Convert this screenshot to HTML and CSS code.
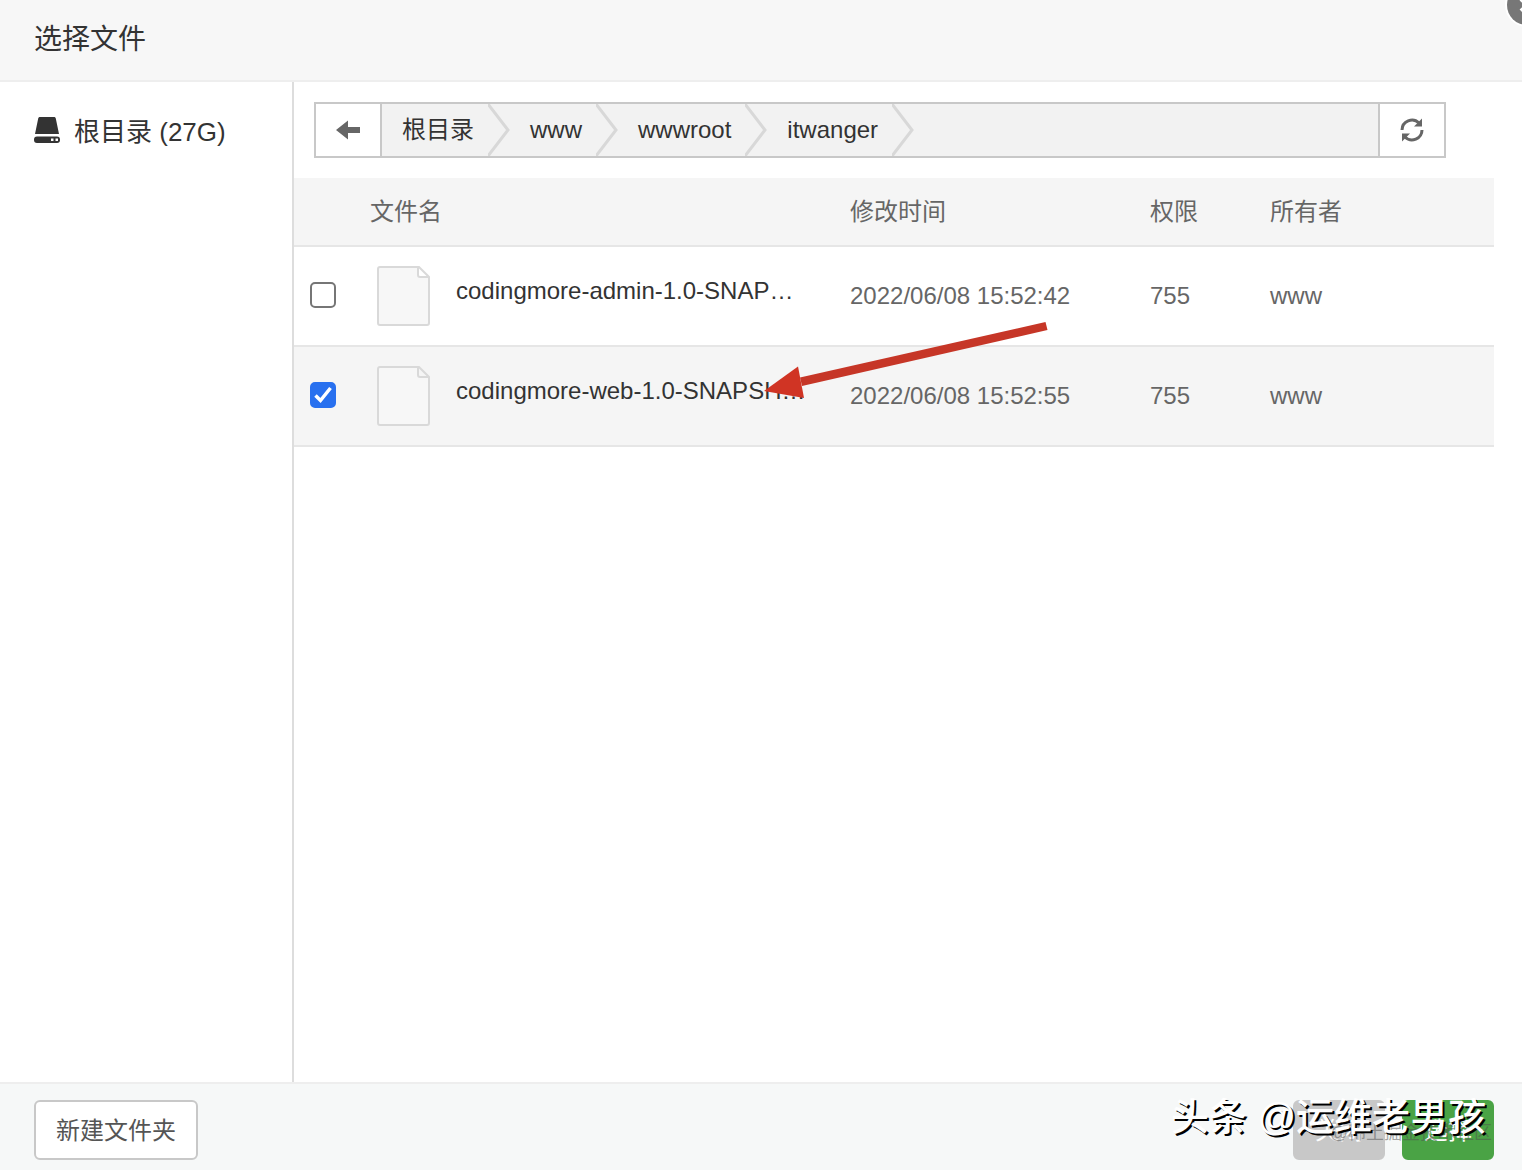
FILE: index.html
```html
<!DOCTYPE html>
<html lang="zh-CN">
<head>
    <meta charset="UTF-8">
    <meta name="viewport" content="width=device-width, initial-scale=1">
    <title>选择文件</title>
    <link rel="stylesheet" href="styles.css">
</head>
<body>
<div class="dialog">
    <header class="dialog-header">
        <h1>选择文件</h1>
        <button type="button" class="close-btn" aria-label="关闭窗口">
            <svg viewBox="0 0 40 40" width="40" height="40">
                <circle cx="20" cy="20" r="20" fill="#777"/>
                <path d="M14 26 L26 14 M14 14 L26 26" stroke="#fff" stroke-width="4"/>
            </svg>
        </button>
    </header>

    <div class="dialog-body">
        <nav class="side">
            <a href="#" class="disk">
                <svg viewBox="0 0 26 26" width="26" height="26" fill="#333">
                    <path d="M6 0h14c1 0 1.600.5 1.800 1.500L25 17H1L4.200 1.500C4.400.5 5 0 6 0z"/>
                    <path fill-rule="evenodd" d="M3 19.500h20a3 3 0 0 1 3 3v.5a3 3 0 0 1-3 3H3a3 3 0 0 1-3-3v-.5a3 3 0 0 1 3-3zM17 21.500v2.500h2.500v-2.500zM21.500 21.500v2.500h2.500v-2.500z"/>
                </svg>
                <span>根目录 (27G)</span>
            </a>
        </nav>

        <main class="content">
            <div class="path-bar">
                <button type="button" class="path-btn back" aria-label="返回">
                    <svg viewBox="0 0 24 20" width="24" height="20">
                        <path d="M0 10 L12 0.500 V7 H24 V13 H12 V19.500 Z" fill="#666"/>
                    </svg>
                </button>
                <ol class="crumbs">
                    <li><a href="#">根目录</a><svg viewBox="0 0 22 52" width="22" height="52"><path d="M0 0 L20 26 L0 52"/></svg></li>
                    <li><a href="#">www</a><svg viewBox="0 0 22 52" width="22" height="52"><path d="M0 0 L20 26 L0 52"/></svg></li>
                    <li><a href="#">wwwroot</a><svg viewBox="0 0 22 52" width="22" height="52"><path d="M0 0 L20 26 L0 52"/></svg></li>
                    <li><a href="#">itwanger</a><svg viewBox="0 0 22 52" width="22" height="52"><path d="M0 0 L20 26 L0 52"/></svg></li>
                </ol>
                <button type="button" class="path-btn refresh" aria-label="刷新">
                    <svg viewBox="0 0 24 24" width="24" height="24">
                        <path d="M2 12 A10 10 0 0 1 19 5" fill="none" stroke="#666" stroke-width="3"/>
                        <path d="M22 0.500 V8.500 H14 Z" fill="#666"/>
                        <path d="M22 12 A10 10 0 0 1 5 19" fill="none" stroke="#666" stroke-width="3"/>
                        <path d="M2 23.500 V15.500 H10 Z" fill="#666"/>
                    </svg>
                </button>
            </div>

            <div class="file-list">
                <table>
                    <colgroup>
                        <col class="col-check">
                        <col class="col-name">
                        <col class="col-time">
                        <col class="col-mode">
                        <col class="col-owner">
                    </colgroup>
                    <thead>
                        <tr>
                            <th></th>
                            <th>文件名</th>
                            <th>修改时间</th>
                            <th>权限</th>
                            <th>所有者</th>
                        </tr>
                    </thead>
                    <tbody>
                        <tr>
                            <td class="check"><input type="checkbox" id="file-1"></td>
                            <td>
                                <label class="file" for="file-1">
                                    <svg class="file-icon" viewBox="0 0 54 60" width="54" height="60">
                                        <path d="M4 1 H43 L53 11 V57 Q53 59 51 59 H4 Q2 59 2 57 V3 Q2 1 4 1 Z M42 1 V9 Q42 11 44 11 H53"/>
                                    </svg>
                                    <span class="file-name">codingmore-admin-1.0-SNAPSHOT.jar</span>
                                </label>
                            </td>
                            <td>2022/06/08 15:52:42</td>
                            <td>755</td>
                            <td>www</td>
                        </tr>
                        <tr class="current">
                            <td class="check"><input type="checkbox" id="file-2" checked></td>
                            <td>
                                <label class="file" for="file-2">
                                    <svg class="file-icon" viewBox="0 0 54 60" width="54" height="60">
                                        <path d="M4 1 H43 L53 11 V57 Q53 59 51 59 H4 Q2 59 2 57 V3 Q2 1 4 1 Z M42 1 V9 Q42 11 44 11 H53"/>
                                    </svg>
                                    <span class="file-name">codingmore-web-1.0-SNAPSHOT.jar</span>
                                </label>
                            </td>
                            <td>2022/06/08 15:52:55</td>
                            <td>755</td>
                            <td>www</td>
                        </tr>
                    </tbody>
                </table>
                <svg class="arrow" viewBox="0 0 284 80" width="284" height="80">
                    <path d="M281.500 0 L36 55.500 L38 64 L283.500 8 Z" fill="#c63627"/>
                    <path d="M0 69 L34 44.500 L40 76 Z" fill="#d03424"/>
                </svg>
            </div>
        </main>
    </div>

    <footer class="dialog-footer">
        <button type="button" class="btn">新建文件夹</button>
        <div class="actions">
            <button type="button" class="btn btn-close">关闭</button>
            <button type="button" class="btn btn-ok">选择</button>
            <span class="mark-small">@稀土掘金技术社区</span>
            <span class="mark">头条 @运维老男孩</span>
        </div>
    </footer>
</div>
</body>
</html>
```
FILE: styles.css
```css
* {
    box-sizing: border-box;
}

body, h1, ol {
    margin: 0;
    padding: 0;
}

body, button {
    font-family: "Liberation Sans", "Noto Sans CJK SC", sans-serif;
    font-size: 24px;
    color: #333;
}

a {
    color: #333;
    text-decoration: none;
}

svg {
    display: block;
    flex: none;
}

.dialog {
    display: flex;
    flex-direction: column;
    min-height: 100vh;
    background: #fff;
}

.dialog-header {
    position: relative;
    overflow: hidden;
    padding: 20px 34px;
    background: #f7f7f7;
    border-bottom: 2px solid #eee;
}

.dialog-header h1 {
    font-size: 28px;
    line-height: 40px;
    font-weight: normal;
}

.close-btn {
    position: absolute;
    top: -15px;
    right: -25px;
    padding: 0;
    border: 0;
    border-radius: 50%;
    background: none;
    box-shadow: 0 0 0 2px #fff;
}

.dialog-body {
    display: flex;
    flex: 1;
}

.side {
    width: 294px;
    padding: 30px 34px;
    border-right: 2px solid #ddd;
}

.disk {
    display: flex;
    align-items: center;
    gap: 14px;
    font-size: 26px;
    line-height: 40px;
}

.disk svg {
    margin-bottom: 4px;
}

.content {
    flex: 1;
    min-width: 0;
    padding: 20px 28px 20px 0;
}

/* path bar */
.path-bar {
    display: flex;
    height: 56px;
    margin: 0 48px 20px 20px;
    border: 2px solid #c8c8c8;
    background: #f2f2f2;
}

.path-btn {
    display: flex;
    align-items: center;
    justify-content: center;
    width: 66px;
    padding: 0;
    border: 0;
    background: #fff;
}

.back {
    border-right: 2px solid #c8c8c8;
}

.refresh {
    border-left: 2px solid #c8c8c8;
}

.crumbs {
    display: flex;
    flex: 1;
    list-style: none;
}

.crumbs li {
    display: flex;
    gap: 14px;
    padding-left: 20px;
    line-height: 52px;
}

.crumbs path {
    fill: none;
    stroke: #d8d8d8;
    stroke-width: 3;
}

/* file list */
.file-list {
    position: relative;
}

table {
    width: 100%;
    table-layout: fixed;
    border-collapse: collapse;
    color: #666;
}

.col-check {
    width: 76px;
}

.col-name {
    width: 480px;
}

.col-time {
    width: 300px;
}

.col-mode {
    width: 120px;
}

th, td {
    padding: 0;
    text-align: left;
    font-weight: normal;
    border-bottom: 2px solid #e6e6e6;
}

th {
    height: 68px;
    padding-bottom: 5px;
    background: #f5f5f5;
}

td {
    height: 100px;
}

.current {
    background: #f5f5f5;
}

.check {
    padding: 0 0 2px 16px;
}

.check input {
    appearance: none;
    display: block;
    width: 26px;
    height: 26px;
    margin: 0;
    border: 2px solid #767676;
    border-radius: 5px;
    background: #fff;
}

.check input:checked {
    border-color: #2870ef;
    background: #2870ef url("data:image/svg+xml,%3Csvg xmlns='http://www.w3.org/2000/svg' viewBox='0 0 22 22'%3E%3Cpath d='M3.500 11.500 L8.500 16.500 L18.500 4' fill='none' stroke='white' stroke-width='3.500'/%3E%3C/svg%3E") center / 22px no-repeat;
}

.file {
    display: flex;
    gap: 26px;
    padding-left: 6px;
}

.file-icon path {
    fill: #f7f7f7;
    stroke: #d9d9d9;
    stroke-width: 2;
}

.file-name {
    width: 350px;
    line-height: 50px;
    color: #333;
    white-space: nowrap;
    overflow: hidden;
    text-overflow: ellipsis;
}

.arrow {
    position: absolute;
    top: 144px;
    left: 470px;
}

/* footer */
.dialog-footer {
    display: flex;
    justify-content: space-between;
    padding: 16px 28px 10px 34px;
    background: #f6f8f8;
    border-top: 2px solid #eee;
}

.btn {
    height: 60px;
    padding: 0 20px 4px;
    border: 2px solid #c8c8c8;
    border-radius: 6px;
    background: #fff;
    color: #555;
}

.actions {
    position: relative;
    display: flex;
    gap: 17px;
}

.btn-close {
    border-color: #c8c8c8;
    background: #c8c8c8;
    color: #fff;
}

.btn-ok {
    border-color: #4aa345;
    background: #4aa345;
    color: #fff;
}

.mark,
.mark-small {
    position: absolute;
    white-space: nowrap;
    pointer-events: none;
}

.mark-small {
    right: 2px;
    top: 18px;
    font-size: 18px;
    color: rgba(80, 80, 80, 0.5);
}

.mark {
    right: 8px;
    top: -14px;
    font-size: 38px;
    font-weight: 500;
    color: #fff;
    text-shadow: 2px 2px 0 #000;
}
```
